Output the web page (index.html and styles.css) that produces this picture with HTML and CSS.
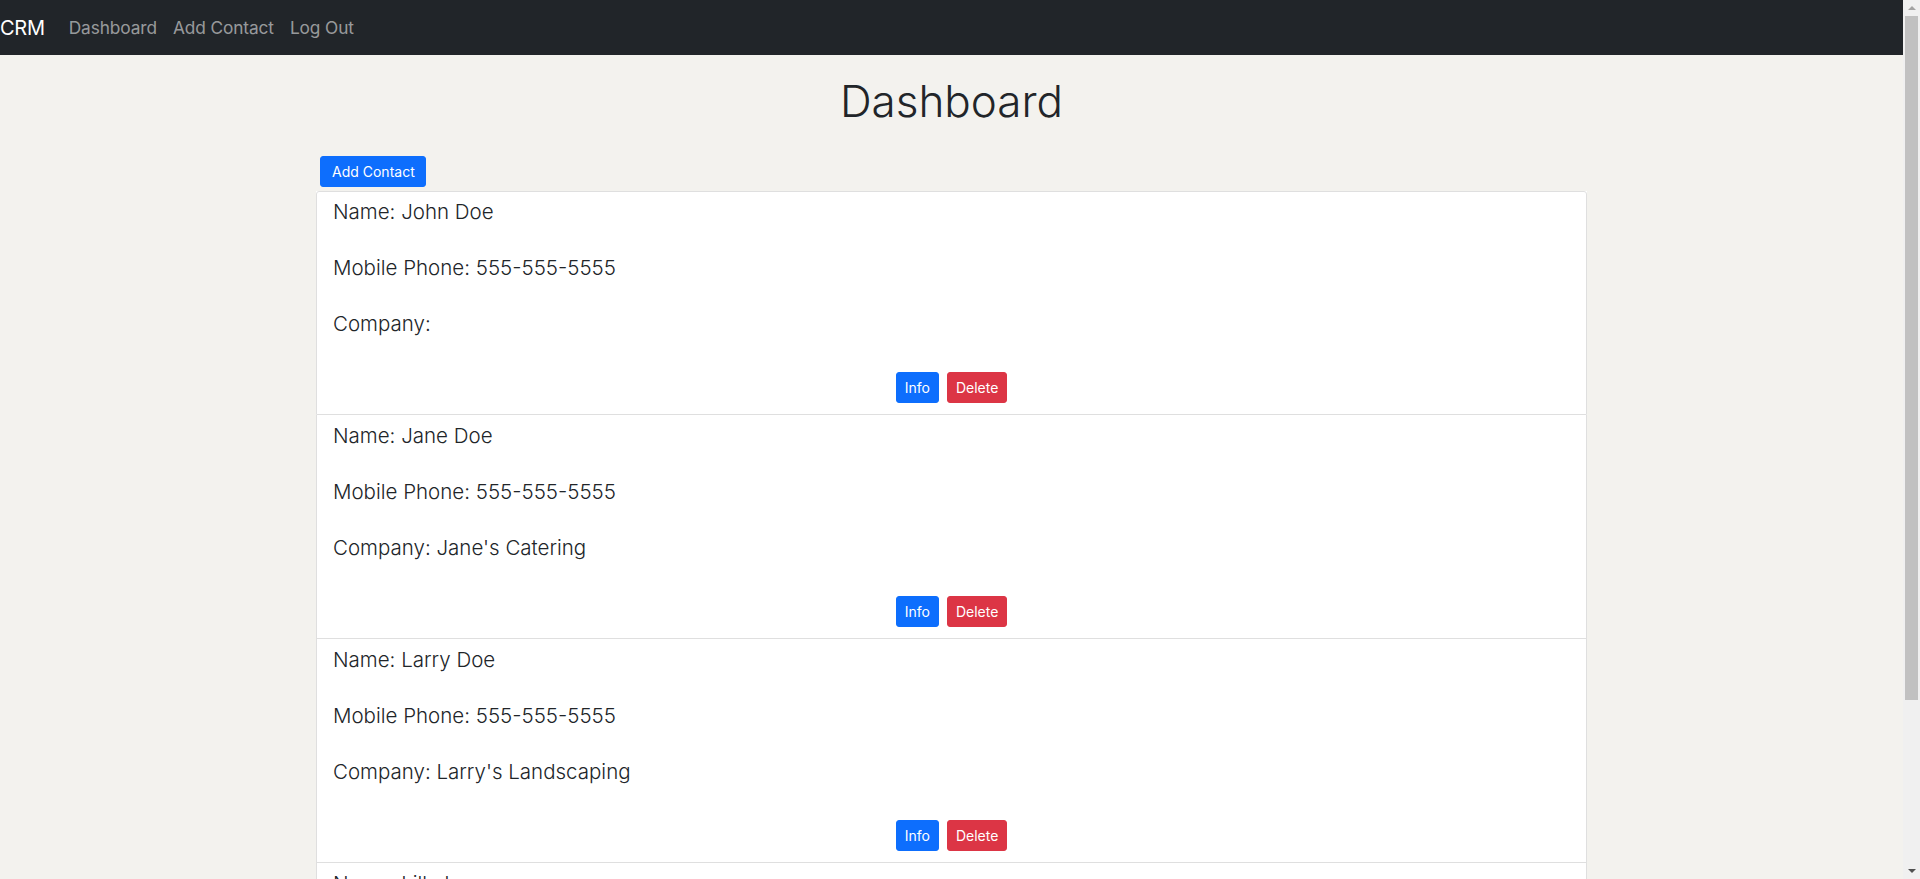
FILE: index.html
```html
<!DOCTYPE html>
<html lang="en">
<head>
<meta charset="utf-8">
<title>CRM</title>
<link rel="stylesheet" href="styles.css">
</head>
<body>
<div class="viewport">
  <nav class="navbar">
    <a class="brand" href="#">CRM</a>
    <a class="nav-link" href="#">Dashboard</a>
    <a class="nav-link" href="#">Add Contact</a>
    <a class="nav-link" href="#">Log Out</a>
  </nav>
  <main class="container">
    <h1 class="title">Dashboard</h1>
    <div class="toolbar"><a class="btn btn-primary" href="#">Add Contact</a></div>
    <div class="list">
      <div class="card">
        <p>Name: John Doe</p>
        <p>Mobile Phone: 555-555-5555</p>
        <p>Company: </p>
        <div class="actions"><a class="btn btn-primary" href="#">Info</a><a class="btn btn-danger" href="#">Delete</a></div>
      </div>
      <div class="card">
        <p>Name: Jane Doe</p>
        <p>Mobile Phone: 555-555-5555</p>
        <p>Company: Jane's Catering</p>
        <div class="actions"><a class="btn btn-primary" href="#">Info</a><a class="btn btn-danger" href="#">Delete</a></div>
      </div>
      <div class="card">
        <p>Name: Larry Doe</p>
        <p>Mobile Phone: 555-555-5555</p>
        <p>Company: Larry's Landscaping</p>
        <div class="actions"><a class="btn btn-primary" href="#">Info</a><a class="btn btn-danger" href="#">Delete</a></div>
      </div>
      <div class="card">
        <p>Name: Lilly Lowe</p>
        <p>Mobile Phone: 555-555-5555</p>
        <p>Company: Lilly's Flowers</p>
        <div class="actions"><a class="btn btn-primary" href="#">Info</a><a class="btn btn-danger" href="#">Delete</a></div>
      </div>
    </div>
  </main>
</div>
<div class="scrollbar" aria-hidden="true">
  <div class="sb-btn"><span class="arrow-up"></span></div>
  <div class="sb-track"><div class="sb-thumb"></div></div>
  <div class="sb-btn"><span class="arrow-down"></span></div>
</div>
</body>
</html>
```
FILE: styles.css
```css
html, body {
  height: 100%;
}
body {
  margin: 0;
  display: flex;
  overflow: hidden;
  background: #f3f2ee;
  font-family: Inter, "Open Sans", sans-serif;
  color: #212529;
}
a {
  text-decoration: none;
}
.viewport {
  flex: 1;
  min-width: 0;
  overflow: hidden;
}
.scrollbar {
  width: 17px;
  flex: none;
  display: flex;
  flex-direction: column;
  background: #f0f0f0;
}
.sb-btn {
  height: 16px;
  display: flex;
  align-items: center;
  justify-content: center;
}
.sb-track {
  flex: 1;
  padding: 0 2px 163px;
}
.sb-thumb {
  height: 100%;
  background: #c1c1c1;
}
.arrow-up {
  width: 0;
  height: 0;
  border-left: 4px solid transparent;
  border-right: 4px solid transparent;
  border-bottom: 4px solid #a3a3a3;
}
.arrow-down {
  width: 0;
  height: 0;
  border-left: 4px solid transparent;
  border-right: 4px solid transparent;
  border-top: 4px solid #505050;
}
.navbar {
  display: flex;
  align-items: center;
  height: 55px;
  background: #212529;
}
.brand {
  color: #fff;
  font-size: 20px;
  margin-right: 16px;
  letter-spacing: -0.3px;
}
.nav-link {
  color: rgba(255, 255, 255, 0.55);
  font-size: 17.3px;
  padding: 8px;
  font-weight: 400;
  letter-spacing: -0.1px;
}
.container {
  width: 1271px;
  margin: 0 auto;
}
.title {
  margin: 0;
  padding-top: 16px;
  height: 85px;
  text-align: center;
  font-size: 44px;
  font-weight: 300;
  line-height: 60px;
}
.toolbar {
  display: flex;
  height: 35px;
  align-items: flex-start;
  padding-left: 4px;
}
.btn {
  display: inline-block;
  color: #fff;
  font-size: 14px;
  line-height: 21px;
  padding: 4px 8px;
  border: 1px solid transparent;
  border-radius: 3px;
}
.btn-primary {
  background: #0d6efd;
  border-color: #0d6efd;
}
.btn-danger {
  background: #dc3545;
  border-color: #dc3545;
}
.toolbar .btn {
  padding: 4px 10px 4px 11px;
}
.list {
  background: #fff;
}
.card {
  border: 1px solid #dfdfdf;
  border-top-width: 0;
  padding: 7px 16px 11px;
  height: 224px;
  box-sizing: border-box;
  display: flex;
  flex-direction: column;
}
.card:first-child {
  border-top-width: 1px;
  padding-top: 6px;
  border-radius: 3px 3px 0 0;
}
.card p {
  margin: 0 0 28px;
  font-size: 20.5px;
  line-height: 28px;
  font-weight: 300;
}
.actions {
  margin-top: auto;
  display: flex;
  justify-content: center;
  gap: 8px;
}
```
